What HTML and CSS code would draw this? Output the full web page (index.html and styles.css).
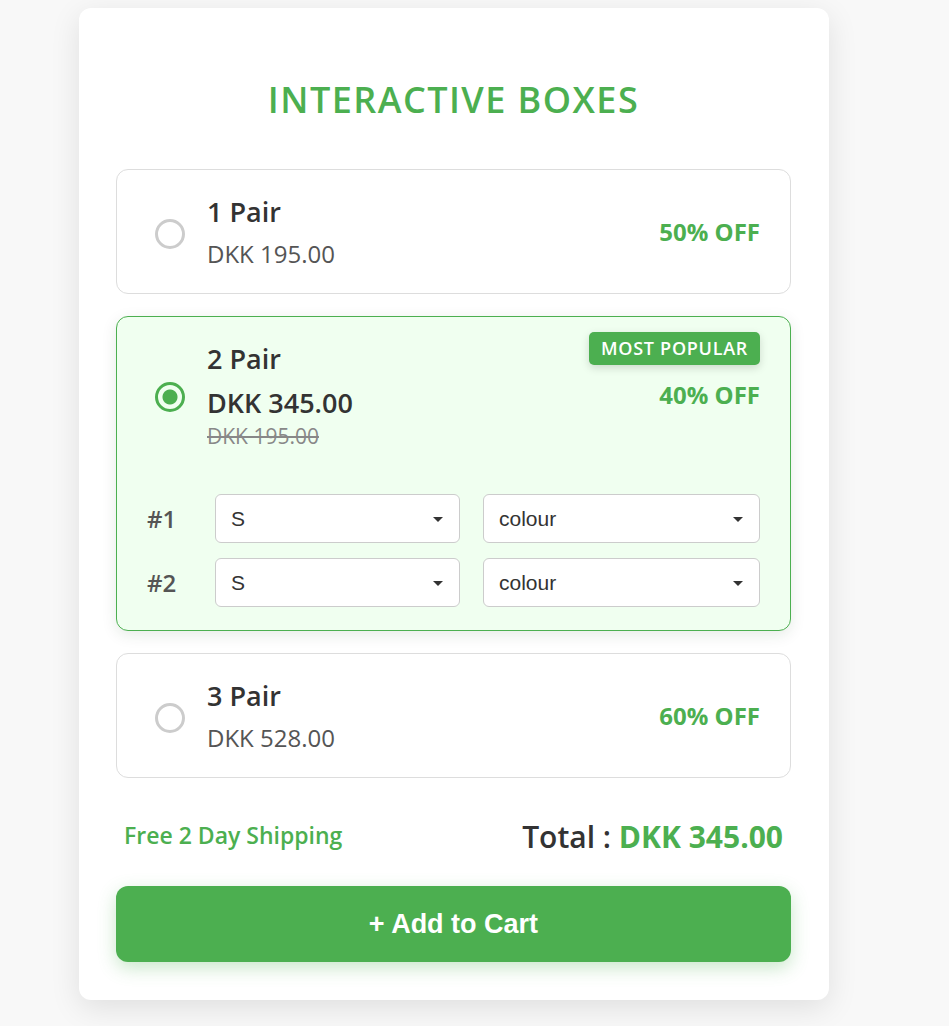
FILE: index.html
```html
<!DOCTYPE html>
<html lang="en">
<head>
<meta charset="utf-8">
<meta name="viewport" content="width=device-width, initial-scale=1">
<title>Interactive Boxes</title>
<link rel="stylesheet" href="styles.css">
</head>
<body>
<main class="card">
  <h1 class="title">Interactive Boxes</h1>
  <form class="form">
    <div class="box">
      <div class="row">
        <input class="radio" type="radio" name="pair" id="pair1">
        <label class="info" for="pair1"><span class="name">1 Pair</span><span class="price">DKK 195.00</span></label>
        <div class="offer"><span class="discount">50% OFF</span></div>
      </div>
    </div>
    <div class="box selected">
      <div class="row">
        <input class="radio" type="radio" name="pair" id="pair2" checked>
        <label class="info" for="pair2"><span class="name">2 Pair</span><span class="price strong">DKK 345.00</span><s class="old">DKK 195.00</s></label>
        <div class="offer"><span class="badge">Most Popular</span><span class="discount">40% OFF</span></div>
      </div>
      <div class="options">
        <div class="option">
          <span class="number">#1</span>
          <select class="select size" aria-label="Size, pair 1"><option>S</option><option>M</option><option>L</option></select>
          <select class="select colour" aria-label="Colour, pair 1"><option>colour</option><option>Black</option></select>
        </div>
        <div class="option">
          <span class="number">#2</span>
          <select class="select size" aria-label="Size, pair 2"><option>S</option><option>M</option><option>L</option></select>
          <select class="select colour" aria-label="Colour, pair 2"><option>colour</option><option>Black</option></select>
        </div>
      </div>
    </div>
    <div class="box">
      <div class="row">
        <input class="radio" type="radio" name="pair" id="pair3">
        <label class="info" for="pair3"><span class="name">3 Pair</span><span class="price">DKK 528.00</span></label>
        <div class="offer"><span class="discount">60% OFF</span></div>
      </div>
    </div>
    <div class="summary">
      <span class="shipping">Free 2 Day Shipping</span>
      <span class="total">Total : <strong class="amount">DKK 345.00</strong></span>
    </div>
    <button class="add" type="button">+ Add to Cart</button>
  </form>
</main>
</body>
</html>
```
FILE: styles.css
```css
* { box-sizing: border-box; }
body {
  margin: 0;
  padding: 8px 120px 26px 79px;
  background: #f8f8f8;
  color: #333;
  font-family: "Open Sans", sans-serif;
}
.card {
  max-width: 750px;
  margin: 0 auto;
  padding: 60px 38px 38px 37px;
  background: #fff;
  border-radius: 12px;
  box-shadow: 0 8px 30px rgba(0, 0, 0, 0.1);
}
.title {
  margin: 0 0 37px;
  color: #4caf50;
  font-size: 36px;
  font-weight: 600;
  line-height: 64px;
  letter-spacing: 0.04em;
  text-align: center;
  text-transform: uppercase;
}
.form { display: flex; flex-direction: column; }
.box {
  margin-bottom: 22px;
  padding: 20px 30px;
  border: 1px solid #ddd;
  border-radius: 12px;
}
.selected {
  background: #f0fff0;
  border-color: #4caf50;
  box-shadow: 0 4px 15px rgba(0, 60, 0, 0.1);
}
.row { display: flex; align-items: center; }
.radio {
  appearance: none;
  flex: none;
  width: 30px;
  height: 30px;
  margin: 5px 22px 0 8px;
  border: 3px solid #ccc;
  border-radius: 50%;
  background: #fff;
}
.radio:checked {
  border-color: #4caf50;
  background: radial-gradient(circle, #4caf50 7px, transparent 8px);
}
.info { display: flex; flex: 1; flex-direction: column; }
.name { font-size: 27px; font-weight: 600; line-height: 44px; }
.price { color: #555; font-size: 24px; line-height: 39px; }
.strong { color: #333; font-size: 27px; font-weight: 600; line-height: 43px; }
.old { padding-bottom: 4px; color: #888; font-size: 21px; line-height: 24px; }
.offer { position: relative; }
.discount { color: #4caf50; font-size: 24px; font-weight: 700; }
.badge {
  position: absolute;
  right: 0;
  bottom: 46px;
  padding: 0 12px;
  border-radius: 5px;
  background: #4caf50;
  color: #fff;
  font-size: 18px;
  font-weight: 600;
  line-height: 33px;
  letter-spacing: 0.04em;
  text-transform: uppercase;
  white-space: nowrap;
  box-shadow: 0 3px 8px rgba(0, 0, 0, 0.15);
}
.options { display: grid; gap: 15px; padding: 42px 0 3px; }
.option { display: grid; grid-template-columns: 45px 245fr 277fr; column-gap: 23px; align-items: center; }
.number { color: #555; font-size: 24px; font-weight: 600; }
.select {
  appearance: none;
  width: 100%;
  height: 49px;
  padding: 0 15px;
  border: 1px solid #ccc;
  border-radius: 6px;
  background: #fff url("data:image/svg+xml,%3Csvg xmlns='http://www.w3.org/2000/svg' width='10' height='7'%3E%3Cpath d='M0 2h10L5 7z' fill='%23333'/%3E%3C/svg%3E") no-repeat right 16px center;
  color: #333;
  font-family: "Liberation Sans", Arial, sans-serif;
  font-size: 21px;
}
.summary {
  display: flex;
  align-items: flex-start;
  justify-content: space-between;
  padding: 15px 8px 27px;
}
.shipping { color: #4caf50; font-size: 23px; font-weight: 600; line-height: 40px; }
.total { font-size: 30px; font-weight: 600; line-height: 44px; }
.amount { color: #4caf50; font-weight: 700; }
.add {
  height: 76px;
  border: 0;
  border-radius: 12px;
  background: #4caf50;
  color: #fff;
  font-family: "Liberation Sans", Arial, sans-serif;
  font-size: 27px;
  font-weight: 700;
  box-shadow: 0 6px 18px rgba(76, 175, 80, 0.3);
}
```
